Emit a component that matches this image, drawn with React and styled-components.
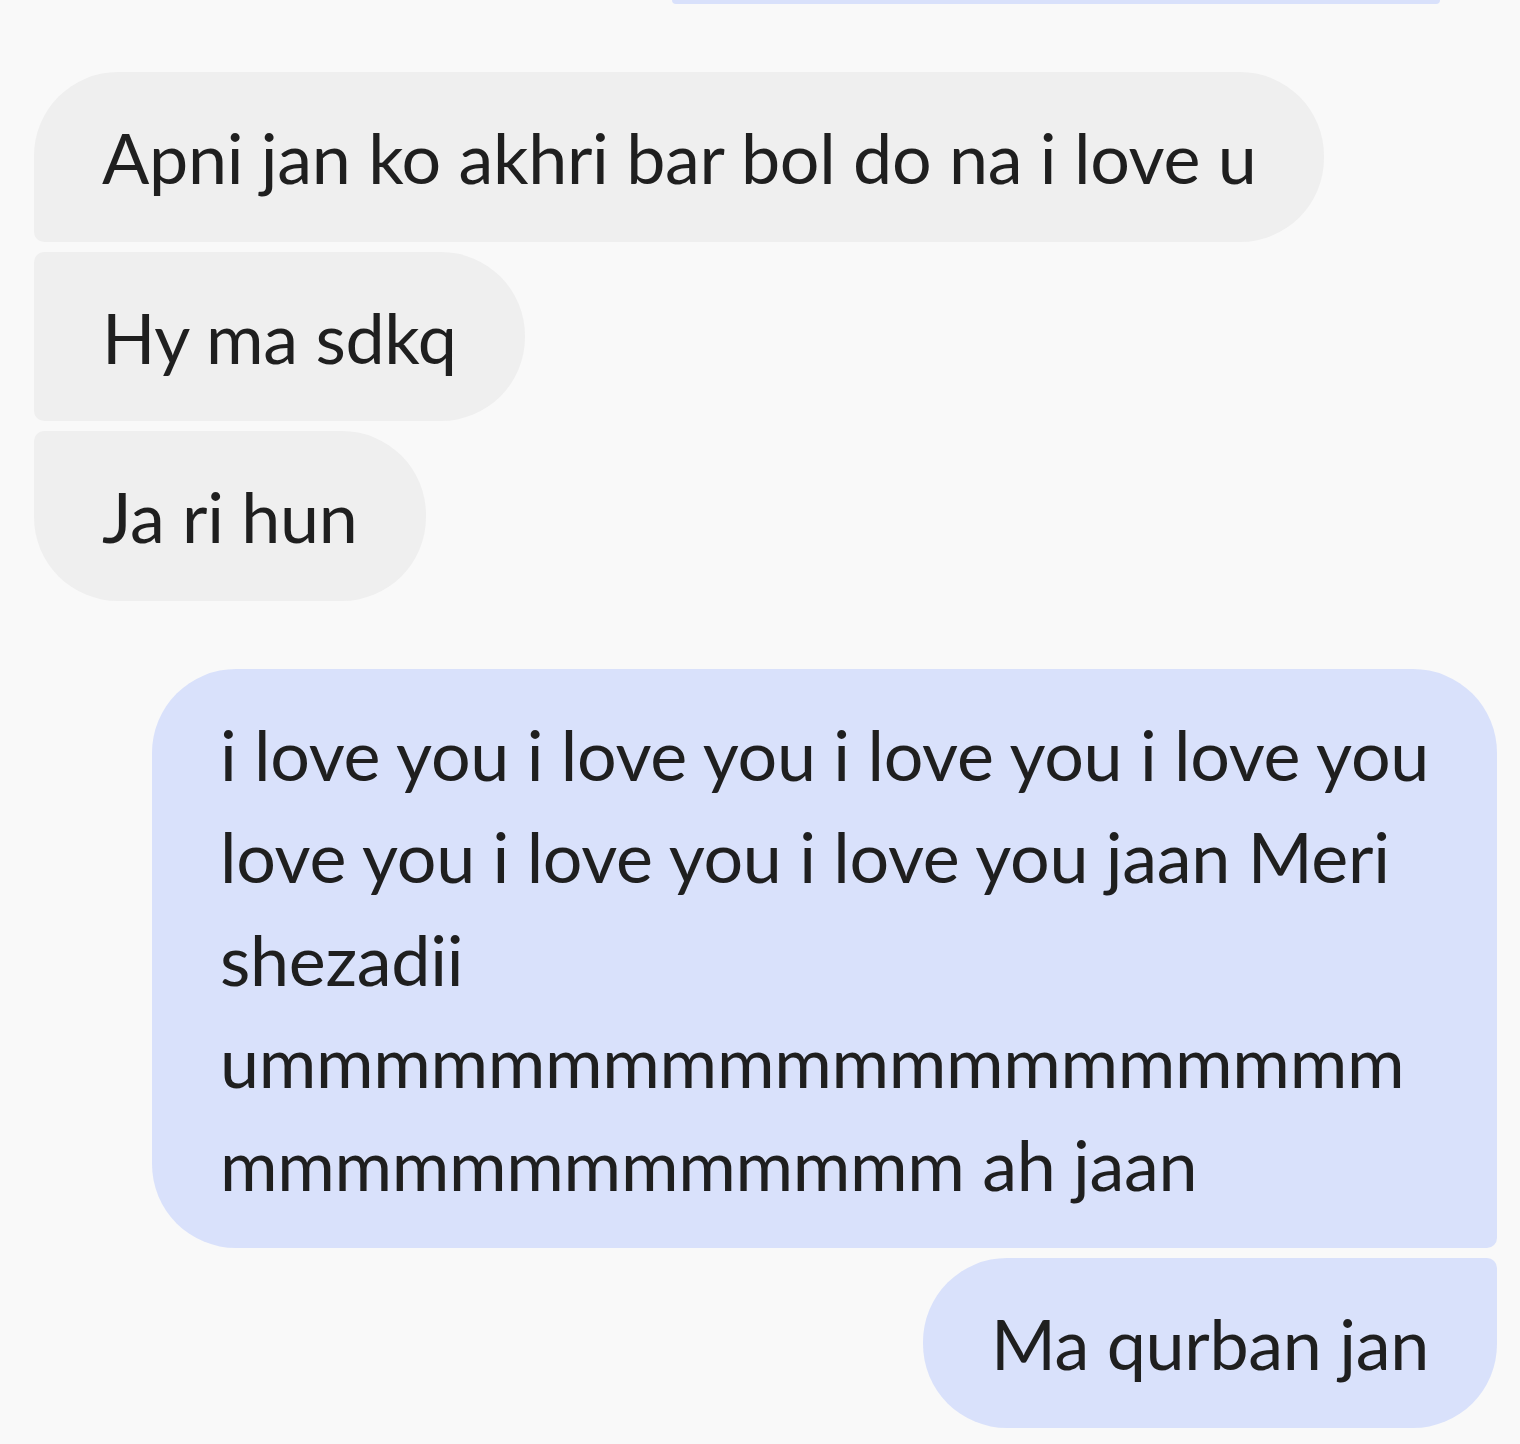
import React from "react";
import styled, { createGlobalStyle } from "styled-components";

const messages = [
  {
    from: "them",
    group: [
      "Apni jan ko akhri bar bol do na i love u",
      "Hy ma sdkq",
      "Ja ri hun",
    ],
  },
  {
    from: "me",
    group: [
      "i love you i love you i love you i love you\nlove you i love you i love you jaan Meri\nshezadii\nummmmmmmmmmmmmmmmmmmm\nmmmmmmmmmmmmm ah jaan",
      "Ma qurban jan",
    ],
  },
];

const BIG = "84px";
const SMALL = "10px";

function cornersFor(from, index, count) {
  const first = index === 0;
  const last = index === count - 1;
  const tail = first && last ? BIG : null;
  if (from === "them") {
    const tl = first ? BIG : SMALL;
    const bl = last ? BIG : SMALL;
    return `${tl} ${BIG} ${BIG} ${tail || bl}`;
  }
  const tr = first ? BIG : SMALL;
  const br = last ? BIG : SMALL;
  return `${BIG} ${tr} ${tail || br} ${BIG}`;
}

export default function App() {
  return (
    <>
      <GlobalStyle />
      <Thread>
        <Group $from="me">
          <PreviousTail />
        </Group>
        {messages.map((m, gi) => (
          <Group key={gi} $from={m.from}>
            {m.group.map((text, i) => (
              <Bubble
                key={i}
                $from={m.from}
                $corners={cornersFor(m.from, i, m.group.length)}
              >
                {text}
              </Bubble>
            ))}
          </Group>
        ))}
      </Thread>
    </>
  );
}

/* ================== Styled Components ================== */

const GlobalStyle = createGlobalStyle`
  html, body {
    margin: 0;
    padding: 0;
    background: #f9f9f9;
  }
  body {
    font-family: Lato, "Open Sans", "Liberation Sans", sans-serif;
    color: #1f1f1f;
  }
`;

const Thread = styled.div`
  display: flex;
  flex-direction: column;
  gap: 68px;
  width: 1520px;
  min-height: 1444px;
  box-sizing: border-box;
  padding: 0 23px 0 34px;
  overflow: hidden;
`;

const Group = styled.div`
  display: flex;
  flex-direction: column;
  gap: 10px;
  align-items: ${(p) => (p.$from === "me" ? "flex-end" : "flex-start")};
`;

const PreviousTail = styled.div`
  width: 768px;
  height: 4px;
  margin-right: 57px;
  background: #d9e1fb;
  border-radius: 0 0 16px 16px;
`;

const Bubble = styled.div`
  box-sizing: border-box;
  padding: 34px 68px 33px;
  font-size: 70px;
  line-height: 102.5px;
  letter-spacing: -0.3px;
  white-space: pre-line;
  background: ${(p) => (p.$from === "me" ? "#d9e1fb" : "#efefef")};
  border-radius: ${(p) => p.$corners};
`;
